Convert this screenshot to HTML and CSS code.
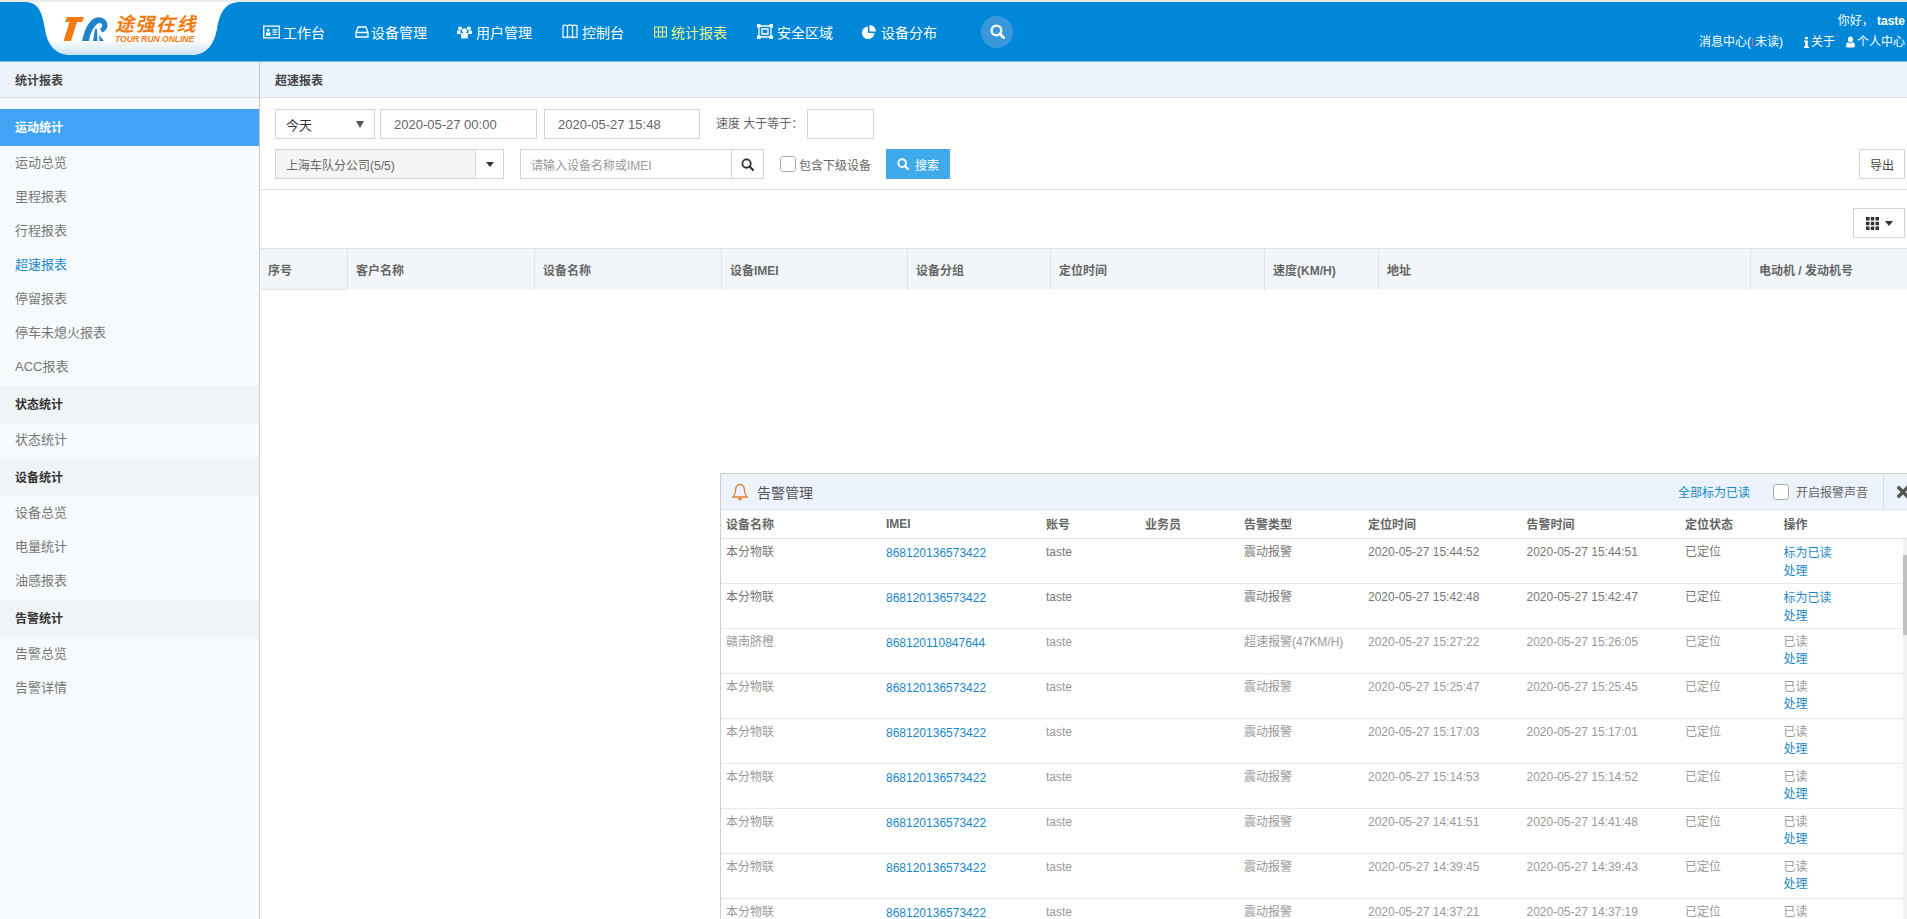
FILE: index.html
```html
<!DOCTYPE html>
<html lang="zh-CN">
<head>
<meta charset="utf-8">
<title>超速报表</title>
<link rel="stylesheet" href="styles.css">
</head>
<body>
<header class="top">
  <div class="brand">
    <svg class="brand-art" viewBox="0 0 263 59" width="263" height="59">
      <defs>
        <linearGradient id="tab" x1="0" y1="0" x2="0" y2="1">
          <stop offset="0" stop-color="#ffffff"/>
          <stop offset="0.72" stop-color="#ffffff"/>
          <stop offset="1" stop-color="#c9e3f4"/>
        </linearGradient>
      </defs>
      <path d="M24 0 C39 0 42 10 45 27 C47 43 56 53 70 53 L192 53 C206 53 214 43 217 27 C220 10 225 0 241 0 Z" fill="url(#tab)"/>
      <path d="M67 15 L84 15 L82 20 L77 20 L71 39 L63.500 39 L69.500 20 L65 20 Z" fill="#f57a10"/>
      <path d="M82 39 C85 25 90 17 97 15.500 C103 14.500 108 19 107.500 24 C107 27 105 29.500 102 30.500 L100 26.500 C102 25.500 102.500 24 102 22.500 C101 20.500 98.500 20.500 96.500 22.500 C92 27 90 33 89 39 Z" fill="#2283cd"/>
      <path d="M93 39 L95 27 L97 27 L97.500 39 Z M99 33 L104 39 L99.500 39 Z" fill="#2283cd"/>
      <text class="brand-cn" x="115" y="29">途强在线</text>
      <text class="brand-en" x="115" y="40">TOUR RUN ONLINE</text>
    </svg>
  </div>
  <nav class="nav">
    <a class="nav-item nav-a"><svg class="ico" viewBox="0 0 18 14" width="17" height="14"><path fill-rule="evenodd" fill="#fff" d="M0 0H18V14H0ZM1.500 1.500V12.500H16.500V1.500Z"/><path fill="#fff" d="M3 7.500H8V11H3ZM5.500 3.500A1.600 1.600 0 1 1 5.490 3.500ZM10 4H15V5.300H10ZM10 6.500H15V7.800H10ZM10 9H15V10.300H10Z"/></svg>工作台</a>
    <a class="nav-item nav-b"><svg class="ico" viewBox="0 0 14 12" width="14" height="12"><path fill="none" stroke="#fff" stroke-width="1.300" d="M3.200 1H10.800L13 6.500V11H1V6.500ZM1 6.500H13"/></svg>设备管理</a>
    <a class="nav-item nav-c"><svg class="ico" viewBox="0 0 16 14" width="15" height="14"><path fill="#fff" d="M8 3A2.600 2.600 0 1 1 7.990 3ZM3.300 1A2.100 2.100 0 1 1 3.290 1ZM12.700 1A2.100 2.100 0 1 1 12.690 1ZM0 5.500H3.800C3.500 6.800 3.700 8 4.300 9H0ZM16 5.500H12.200C12.500 6.800 12.300 8 11.700 9H16ZM4.500 8H11.500V14H4.500Z"/></svg>用户管理</a>
    <a class="nav-item nav-d"><svg class="ico" viewBox="0 0 16 15" width="16" height="15"><path fill="none" stroke="#fff" stroke-width="1.200" d="M1 1.500C3 .8 4.200 .8 5.500 1.800C6.800 .8 9.200 .8 10.500 1.800C11.800 .8 13 .8 15 1.500V13.500C13 12.800 11.800 12.800 10.500 13.800C9.200 12.800 6.800 12.800 5.500 13.800C4.200 12.800 3 12.800 1 13.500ZM5.500 1.800V13.800M10.500 1.800V13.800"/></svg>控制台</a>
    <a class="nav-item nav-e nav-on"><svg class="ico" viewBox="0 0 14 12" width="13" height="12"><path fill="none" stroke="#e8f58a" stroke-width="1.200" d="M.6.600H13.400V11.400H.6ZM.6 6H13.400M4.900.6V11.400M9.100.6V11.400"/></svg>统计报表</a>
    <a class="nav-item nav-f"><svg class="ico" viewBox="0 0 16 15" width="16" height="15"><path fill="none" stroke="#fff" stroke-width="1.300" d="M2 2H14V13H2ZM5 5H11V10H5Z"/><path fill="#fff" d="M0 0H3.500V3.500H0ZM12.500 0H16V3.500H12.500ZM0 11.500H3.500V15H0ZM12.500 11.500H16V15H12.500Z"/></svg>安全区域</a>
    <a class="nav-item nav-g"><svg class="ico" viewBox="0 0 14 14" width="14" height="14"><path fill="#fff" d="M6 1.500V8H12.500A6.300 6.300 0 1 1 6 1.500ZM7.500 0A6.500 6.500 0 0 1 14 6.500H7.500Z"/></svg>设备分布</a>
    <span class="nav-search"><svg viewBox="0 0 14 14" width="15" height="15"><circle cx="6" cy="6" r="4.500" fill="none" stroke="#fff" stroke-width="2.200"/><path d="M9.200 9.200L13 13" stroke="#fff" stroke-width="2.500" stroke-linecap="round"/></svg></span>
  </nav>
  <div class="user">
    <div class="user-hello">你好， <b>taste</b></div>
    <div class="user-links">
      <a class="user-msg">消息中心(<i class="msg-mark"></i>未读)</a>
      <a class="user-about"><svg viewBox="0 0 5 11" width="5" height="11"><path fill="#fff" d="M1 0H4V2.200H1ZM0 3.500H3.800V9.500H5V11H0V9.500H1.200V5H0Z"/></svg>关于</a>
      <a class="user-me"><svg viewBox="0 0 10 12" width="9" height="12"><path fill="#fff" d="M5 0C6.800 0 7.800 1.400 7.800 3.200C7.800 5 6.800 6.500 5 6.500C3.200 6.500 2.200 5 2.200 3.200C2.200 1.400 3.200 0 5 0ZM2.300 6.300C3 7 4 7.400 5 7.400C6 7.400 7 7 7.700 6.300C9.200 6.600 10 8 10 10.500C10 11.400 9.400 12 8.500 12H1.500C.6 12 0 11.400 0 10.500C0 8 .8 6.600 2.300 6.300Z"/></svg>个人中心</a>
    </div>
  </div>
</header>

<div class="page">
  <aside class="side">
    <div class="side-head">统计报表</div>
    <div class="side-list">
      <div class="side-group side-active">运动统计</div>
      <a class="side-item">运动总览</a>
      <a class="side-item">里程报表</a>
      <a class="side-item">行程报表</a>
      <a class="side-item side-current">超速报表</a>
      <a class="side-item">停留报表</a>
      <a class="side-item">停车未熄火报表</a>
      <a class="side-item">ACC报表</a>
      <div class="side-group">状态统计</div>
      <a class="side-item">状态统计</a>
      <div class="side-group">设备统计</div>
      <a class="side-item">设备总览</a>
      <a class="side-item">电量统计</a>
      <a class="side-item">油感报表</a>
      <div class="side-group">告警统计</div>
      <a class="side-item">告警总览</a>
      <a class="side-item">告警详情</a>
    </div>
  </aside>

  <main class="main">
    <div class="main-head">超速报表</div>
    <section class="filters">
      <div class="filter-row">
        <div class="box sel-day"><span>今天</span><i class="caret caret-gray"></i></div>
        <div class="box date date-a">2020-05-27 00:00</div>
        <div class="box date date-b">2020-05-27 15:48</div>
        <span class="speed-label">速度 大于等于：</span>
        <div class="box speed"></div>
      </div>
      <div class="filter-row">
        <div class="box sel-company"><span class="sel-company-text">上海车队分公司(5/5)</span><span class="sel-company-btn"><i class="caret"></i></span></div>
        <div class="box search-box"><span class="search-text">请输入设备名称或IMEI</span><span class="search-btn"><svg viewBox="0 0 14 14" width="13" height="13"><circle cx="6" cy="6" r="4.500" fill="none" stroke="#333" stroke-width="2"/><path d="M9.200 9.200L13 13" stroke="#333" stroke-width="2.300" stroke-linecap="round"/></svg></span></div>
        <span class="check check-sub"></span><span class="check-label">包含下级设备</span>
        <a class="btn-search"><svg viewBox="0 0 14 14" width="12" height="12"><circle cx="6" cy="6" r="4.500" fill="none" stroke="#fff" stroke-width="2.200"/><path d="M9.200 9.200L13 13" stroke="#fff" stroke-width="2.500" stroke-linecap="round"/></svg>搜索</a>
        <a class="box btn-export">导出</a>
      </div>
    </section>
    <div class="tools">
      <a class="box btn-cols"><svg viewBox="0 0 13 13" width="13" height="13"><path fill="#333" d="M0 0H3.500V3.500H0ZM4.750 0H8.250V3.500H4.750ZM9.500 0H13V3.500H9.500ZM0 4.750H3.500V8.250H0ZM4.750 4.750H8.250V8.250H4.750ZM9.500 4.750H13V8.250H9.500ZM0 9.500H3.500V13H0ZM4.750 9.500H8.250V13H4.750ZM9.500 9.500H13V13H9.500Z"/></svg><i class="caret"></i></a>
    </div>
    <div class="grid-head">
      <span class="gh gh-first">序号</span>
      <span class="gh">客户名称</span>
      <span class="gh">设备名称</span>
      <span class="gh">设备IMEI</span>
      <span class="gh">设备分组</span>
      <span class="gh">定位时间</span>
      <span class="gh">速度(KM/H)</span>
      <span class="gh">地址</span>
      <span class="gh">电动机 / 发动机号</span>
    </div>
  </main>
</div>

<section class="alarm">
  <div class="alarm-head">
    <svg class="alarm-bell" viewBox="0 0 16 18" width="16" height="18"><path fill="none" stroke="#e8822f" stroke-width="1.300" d="M8 1.500C4.800 1.500 3.600 4 3.600 7C3.600 10.500 2.800 12 1 14H15C13.200 12 12.400 10.500 12.400 7C12.400 4 11.200 1.500 8 1.500Z"/><path fill="#e8822f" d="M5.800 14.800H10.200C10 16.400 9 17.400 8 17.400C7 17.400 6 16.400 5.800 14.800Z"/></svg>
    <span class="alarm-title">告警管理</span>
    <a class="alarm-all">全部标为已读</a>
    <span class="check"></span><span class="alarm-sound">开启报警声音</span>
    <span class="alarm-close"><svg viewBox="0 0 12 12" width="14" height="14"><path d="M1.500 1.500L10.500 10.500M10.500 1.500L1.500 10.500" stroke="#555" stroke-width="3" fill="none"/></svg></span>
  </div>
  <table class="alarm-table">
    <colgroup>
      <col class="c-name"><col class="c-imei"><col class="c-acc"><col class="c-sales"><col class="c-type"><col class="c-time"><col class="c-time"><col class="c-state"><col class="c-op">
    </colgroup>
    <thead><tr><th>设备名称</th><th>IMEI</th><th>账号</th><th>业务员</th><th>告警类型</th><th>定位时间</th><th>告警时间</th><th>定位状态</th><th>操作</th></tr></thead>
    <tbody>
      <tr class="unread"><td>本分物联</td><td><a class="imei">868120136573422</a></td><td>taste</td><td></td><td>震动报警</td><td>2020-05-27 15:44:52</td><td>2020-05-27 15:44:51</td><td>已定位</td><td><a>标为已读</a><br><a>处理</a></td></tr>
      <tr class="unread"><td>本分物联</td><td><a class="imei">868120136573422</a></td><td>taste</td><td></td><td>震动报警</td><td>2020-05-27 15:42:48</td><td>2020-05-27 15:42:47</td><td>已定位</td><td><a>标为已读</a><br><a>处理</a></td></tr>
      <tr><td>赣南脐橙</td><td><a class="imei">868120110847644</a></td><td>taste</td><td></td><td>超速报警(47KM/H)</td><td>2020-05-27 15:27:22</td><td>2020-05-27 15:26:05</td><td>已定位</td><td>已读<br><a>处理</a></td></tr>
      <tr><td>本分物联</td><td><a class="imei">868120136573422</a></td><td>taste</td><td></td><td>震动报警</td><td>2020-05-27 15:25:47</td><td>2020-05-27 15:25:45</td><td>已定位</td><td>已读<br><a>处理</a></td></tr>
      <tr><td>本分物联</td><td><a class="imei">868120136573422</a></td><td>taste</td><td></td><td>震动报警</td><td>2020-05-27 15:17:03</td><td>2020-05-27 15:17:01</td><td>已定位</td><td>已读<br><a>处理</a></td></tr>
      <tr><td>本分物联</td><td><a class="imei">868120136573422</a></td><td>taste</td><td></td><td>震动报警</td><td>2020-05-27 15:14:53</td><td>2020-05-27 15:14:52</td><td>已定位</td><td>已读<br><a>处理</a></td></tr>
      <tr><td>本分物联</td><td><a class="imei">868120136573422</a></td><td>taste</td><td></td><td>震动报警</td><td>2020-05-27 14:41:51</td><td>2020-05-27 14:41:48</td><td>已定位</td><td>已读<br><a>处理</a></td></tr>
      <tr><td>本分物联</td><td><a class="imei">868120136573422</a></td><td>taste</td><td></td><td>震动报警</td><td>2020-05-27 14:39:45</td><td>2020-05-27 14:39:43</td><td>已定位</td><td>已读<br><a>处理</a></td></tr>
      <tr><td>本分物联</td><td><a class="imei">868120136573422</a></td><td>taste</td><td></td><td>震动报警</td><td>2020-05-27 14:37:21</td><td>2020-05-27 14:37:19</td><td>已定位</td><td>已读<br><a>处理</a></td></tr>
    </tbody>
  </table>
  <div class="alarm-scroll"><div class="alarm-thumb"></div></div>
</section>
</body>
</html>
```
FILE: styles.css
```css
* { box-sizing: border-box; }
html, body { margin: 0; height: 100%; overflow: hidden; }
body {
  font-family: "Liberation Sans", "Noto Sans CJK SC", Arial, sans-serif;
  font-size: 12px;
  color: #666;
  background: #fff;
  position: relative;
}
a { color: inherit; text-decoration: none; }
svg { display: block; flex: none; }

/* top bar */
.top {
  height: 62px;
  display: flex;
  background: #0087d8;
  border-top: 2px solid #e9ecee;
  border-bottom: 1px solid #6fb6e6;
  color: #fff;
}
.brand { width: 263px; flex: none; height: 59px; overflow: hidden; }
.brand-cn { font: italic 700 19px "Noto Sans CJK SC", sans-serif; fill: #f57a10; letter-spacing: 1.500px; }
.brand-en { font: italic 700 8.500px "Liberation Sans", sans-serif; fill: #f57a10; letter-spacing: 0; }
.nav { display: flex; align-items: center; font-size: 14px; flex: none; }
.nav-item { display: flex; align-items: center; gap: 4px; white-space: nowrap; margin-left: 30px; }
.nav-a { margin-left: 0; gap: 3px; }
.nav-b { gap: 2px; }
.nav-g { margin-left: 29px; gap: 5px; }
.nav-on { color: #e8f58a; }
.nav-search {
  width: 32px; height: 32px; border-radius: 50%;
  background: #3a97dc;
  display: flex; align-items: center; justify-content: center;
  margin-left: 44px;
}
.user { margin-left: auto; padding-right: 2px; text-align: right; font-size: 12px; }
.user-hello { margin-top: 12px; line-height: 14px; }
.user-links { display: flex; justify-content: flex-end; align-items: center; margin-top: 7px; line-height: 14px; }
.user-about, .user-me { display: flex; align-items: center; gap: 2px; }
.user-about { margin-left: 21px; }
.user-me { margin-left: 11px; }
.msg-mark { display: inline-block; width: 1px; height: 8px; margin: 0 2px 0 1px; background: #d9687a; }

/* page */
.page { display: flex; height: 857px; }
.side {
  width: 260px; flex: none;
  background: #f6fafd;
  border-right: 1px solid #c8c8c8;
}
.side-head, .main-head {
  height: 36px;
  display: flex; align-items: center;
  background: #edf3fc;
  border-bottom: 1px solid #d9dfe6;
  font-weight: 700;
  color: #444;
  padding-left: 15px;
  padding-bottom: 1px;
}
.side-list { padding-top: 11px; }
.side-group {
  height: 37px; display: flex; align-items: center;
  padding: 0 0 2px 15px;
  font-weight: 700; color: #333;
  background: #f1f4f6;
  margin-top: 2px;
}
.side-active { background: #42a4f4; color: #fff; margin-top: 0; }
.side-item {
  height: 34px; display: flex; align-items: center;
  padding: 0 0 3px 15px;
  font-size: 13px; color: #777;
}
.side-current { color: #1a87c9; }

.main { flex: 1; min-width: 0; }
.filters {
  height: 92px;
  padding: 11px 2px 0 15px;
  border-bottom: 1px solid #dedede;
}
.filter-row { display: flex; align-items: center; height: 30px; margin-bottom: 10px; }
.box {
  height: 30px;
  border: 1px solid #d5d5d5;
  background: #fff;
  display: flex; align-items: center;
}
.caret { display: block; width: 0; height: 0; border-left: 4px solid transparent; border-right: 4px solid transparent; border-top: 5px solid #333; }
.caret-gray { border-top: 7px solid #555; }
.sel-day { width: 100px; justify-content: space-between; padding: 0 10px; color: #333; font-size: 13px; }
.date { font-size: 13px; color: #666; padding-left: 13px; }
.date-a { width: 157px; margin-left: 5px; }
.date-b { width: 156px; margin-left: 7px; }
.speed-label { margin-left: 16px; width: 91px; color: #666; position: relative; top: -2px; }
.speed { width: 67px; }
.sel-company { width: 229px; }
.sel-company-text { flex: 1; height: 100%; display: flex; align-items: center; padding-left: 10px; background: #f5f5f5; color: #666; }
.sel-company-btn { width: 28px; height: 100%; border-left: 1px solid #d5d5d5; display: flex; align-items: center; justify-content: center; }
.search-box { width: 244px; margin-left: 16px; }
.search-text { flex: 1; padding-left: 10px; color: #999; }
.search-btn { width: 32px; height: 100%; border-left: 1px solid #d5d5d5; display: flex; align-items: center; justify-content: center; }
.check { width: 16px; height: 16px; flex: none; border: 1px solid #aaa; border-radius: 3px; background: #fff; display: block; }
.check-sub { margin-left: 16px; }
.check-label { margin-left: 3px; color: #666; }
.btn-search {
  margin-left: 15px; width: 64px; height: 30px;
  background: #3fa9e9; color: #fff;
  display: flex; align-items: center; justify-content: center; gap: 6px;
}
.btn-export { margin-left: auto; width: 46px; justify-content: center; color: #444; }

.tools { height: 58px; padding: 18px 2px 0 0; display: flex; justify-content: flex-end; }
.btn-cols { width: 52px; justify-content: center; gap: 6px; }

.grid-head {
  display: grid;
  grid-template-columns: 87px 187px 187px 186px 143px 214px 114px 372px 1fr;
  height: 41px;
  background: #f2f6fa;
  border-top: 1px solid #dfe4ea;
  font-weight: 700;
  color: #666;
}
.gh { display: flex; align-items: center; padding-left: 8px; border-left: 1px solid #dfe4ea; }
.gh-first { border-left: 0; border-bottom: 1px solid #dfe4ea; height: 41px; background: #f2f6fa; }

/* alarm panel floating over the page */
.alarm {
  position: absolute;
  left: 720px; top: 473px;
  width: 1187px; height: 446px;
  overflow: hidden;
  background: #fff;
  border-top: 1px solid #c9d3c9;
  border-left: 1px solid #c9d3c9;
}
.alarm-head {
  height: 36px;
  display: flex; align-items: center;
  background: #edf3fc;
  border-bottom: 1px solid #dbe3ec;
}
.alarm-bell { margin-left: 11px; }
.alarm-title { margin-left: 9px; font-size: 14px; color: #555; }
.alarm-all { margin-left: auto; color: #1a87c9; }
.alarm-head .check { margin-left: 23px; }
.alarm-sound { margin-left: 7px; color: #666; }
.alarm-close {
  margin-left: 15px; width: 24px; height: 100%;
  border-left: 1px solid #d5dce5;
  display: flex; align-items: center;
  padding-left: 12px;
  flex: none;
}
.alarm-table { width: 1187px; table-layout: fixed; border-collapse: collapse; }
.c-name, .c-imei { width: 160px; }
.c-acc, .c-sales { width: 99px; }
.c-type { width: 124px; }
.c-time { width: 158.500px; }
.c-state { width: 98.500px; }
th {
  height: 28px; padding: 0 0 0 5px;
  text-align: left; font-weight: 700; color: #666;
  border-bottom: 1px solid #e3e3e3;
}
td {
  height: 45px; padding: 5px 0 0 5px;
  vertical-align: top; line-height: 16px;
  color: #999;
  border-bottom: 1px solid #e8e8e8;
}
td + td a { line-height: 18px; }
td a { color: #1a87c9; }
.unread td { color: #777; }
.unread td a { color: #1a87c9; }
.alarm-scroll { position: absolute; right: 0; top: 65px; width: 4px; bottom: 0; background: #f1f1f1; }
.alarm-thumb { height: 80px; margin-top: 16px; background: #c1c1c1; }
```
